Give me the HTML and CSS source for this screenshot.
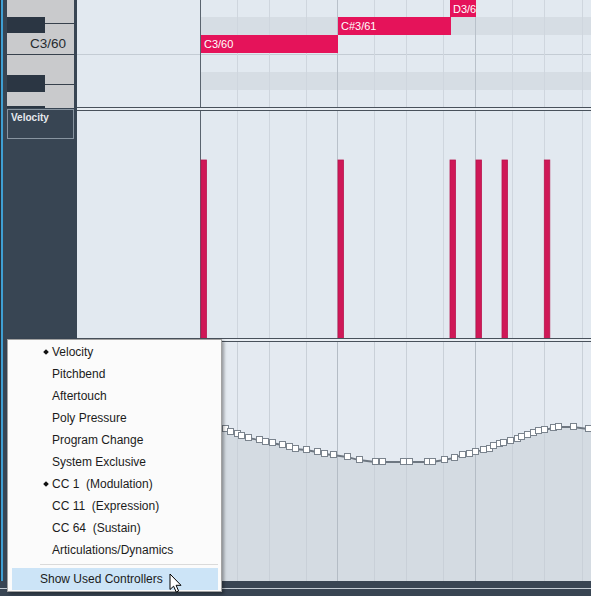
FILE: index.html
```html
<!DOCTYPE html>
<html>
<head>
<meta charset="utf-8">
<link rel="stylesheet" href="styles.css">
</head>
<body>
<div class="app">
  <div class="main">
    <div class="left">
      <div class="keyboard">
        <svg class="keys" width="67" height="108" viewBox="7 0 67 108">
          <rect x="7" y="0" width="67" height="108" fill="#c9cacc"/>
          <line x1="45" y1="23.5" x2="74" y2="23.5" stroke="#37414c"/>
          <line x1="7" y1="54.5" x2="74" y2="54.5" stroke="#37414c"/>
          <line x1="45" y1="84.5" x2="74" y2="84.5" stroke="#37414c"/>
          <rect x="7" y="17" width="38" height="16" fill="#2b3643"/>
          <rect x="7" y="75" width="38" height="17" fill="#2b3643"/>
          <rect x="7" y="106" width="38" height="2" fill="#2b3643"/>
        </svg>
        <span class="key-label">C3/60</span>
      </div>
      <div class="vel-head">Velocity</div>
    </div>
    <div class="lanes">
      <div class="lane note-lane">
        <svg class="bg" width="514" height="107" viewBox="77 0 514 107">
          <rect x="200" y="17" width="391" height="18" fill="#d6dde4"/>
          <rect x="200" y="72" width="391" height="18" fill="#d6dde4"/>
          <line x1="77" y1="54.5" x2="591" y2="54.5" stroke="#c4ccd4"/>
          <g stroke="#cfd6de">
            <line x1="237.5" y1="0" x2="237.5" y2="107"/>
            <line x1="269.5" y1="0" x2="269.5" y2="107"/>
            <line x1="306.5" y1="0" x2="306.5" y2="107"/>
            <line x1="374.5" y1="0" x2="374.5" y2="107"/>
            <line x1="406.5" y1="0" x2="406.5" y2="107"/>
            <line x1="443.5" y1="0" x2="443.5" y2="107"/>
            <line x1="512.5" y1="0" x2="512.5" y2="107"/>
            <line x1="544.5" y1="0" x2="544.5" y2="107"/>
            <line x1="582.5" y1="0" x2="582.5" y2="107"/>
          </g>
          <g stroke="#b9c1ca">
            <line x1="337.5" y1="0" x2="337.5" y2="107"/>
            <line x1="475.5" y1="0" x2="475.5" y2="107"/>
          </g>
          <line x1="200.5" y1="0" x2="200.5" y2="107" stroke="#5a646f"/>
        </svg>
        <div class="note n-c3">C3/60</div>
        <div class="note n-cs3">C#3/61</div>
        <div class="note n-d3">D3/6</div>
      </div>
      <div class="divider"></div>
      <div class="lane vel-lane">
        <svg class="bg" width="514" height="227" viewBox="77 111 514 227">
          <g stroke="#cfd6de">
            <line x1="237.5" y1="111" x2="237.5" y2="338"/>
            <line x1="269.5" y1="111" x2="269.5" y2="338"/>
            <line x1="306.5" y1="111" x2="306.5" y2="338"/>
            <line x1="374.5" y1="111" x2="374.5" y2="338"/>
            <line x1="406.5" y1="111" x2="406.5" y2="338"/>
            <line x1="443.5" y1="111" x2="443.5" y2="338"/>
            <line x1="512.5" y1="111" x2="512.5" y2="338"/>
            <line x1="544.5" y1="111" x2="544.5" y2="338"/>
            <line x1="582.5" y1="111" x2="582.5" y2="338"/>
          </g>
          <g stroke="#b9c1ca">
            <line x1="337.5" y1="111" x2="337.5" y2="338"/>
            <line x1="475.5" y1="111" x2="475.5" y2="338"/>
          </g>
          <line x1="200.5" y1="111" x2="200.5" y2="338" stroke="#5a646f"/>
          <g fill="#cf1857" stroke="#b8164e" stroke-width="0.8">
            <rect x="201" y="160" width="5.5" height="180"/>
            <rect x="338" y="160" width="5.5" height="180"/>
            <rect x="450" y="160" width="5.5" height="180"/>
            <rect x="476" y="160" width="5.5" height="180"/>
            <rect x="502" y="160" width="5.5" height="180"/>
            <rect x="544.3" y="160" width="5.5" height="180"/>
          </g>
        </svg>
      </div>
      <div class="divider"></div>
      <div class="lane cc-lane">
        <svg class="bg" width="514" height="239" viewBox="77 342 514 239">
          <polygon fill="#d4dbe2" points="200,427 215,428 225,429 230,432 237,434 241,436 248,438 259,440 265,442 272,443 282,445 289,447 295,449 306,450 317,452 324,454 333,455 347,457 359,460 375,462 382,462 403,462 409,462 427,462 432,462 444,460 454,458 462,455 469,454 475,452 483,450 489,449 493,446 499,444 503,443 510,441 517,439 521,437 527,435 533,433 538,431 544,430 553,428 558,427 573,427 588,429 591,429 591,581 200,581"/>
          <g stroke="#c9d0d8">
            <line x1="237.5" y1="342" x2="237.5" y2="581"/>
            <line x1="269.5" y1="342" x2="269.5" y2="581"/>
            <line x1="306.5" y1="342" x2="306.5" y2="581"/>
            <line x1="374.5" y1="342" x2="374.5" y2="581"/>
            <line x1="406.5" y1="342" x2="406.5" y2="581"/>
            <line x1="443.5" y1="342" x2="443.5" y2="581"/>
            <line x1="512.5" y1="342" x2="512.5" y2="581"/>
            <line x1="544.5" y1="342" x2="544.5" y2="581"/>
            <line x1="582.5" y1="342" x2="582.5" y2="581"/>
          </g>
          <g stroke="#b4bcc5">
            <line x1="337.5" y1="342" x2="337.5" y2="581"/>
            <line x1="475.5" y1="342" x2="475.5" y2="581"/>
          </g>
          <polyline fill="none" stroke="#6e7781" stroke-width="1.8" points="200,427 215,428 225,429 230,432 237,434 241,436 248,438 259,440 265,442 272,443 282,445 289,447 295,449 306,450 317,452 324,454 333,455 347,457 359,460 375,462 382,462 403,462 409,462 427,462 432,462 444,460 454,458 462,455 469,454 475,452 483,450 489,449 493,446 499,444 503,443 510,441 517,439 521,437 527,435 533,433 538,431 544,430 553,428 558,427 573,427 588,429 591,429"/>
          <g fill="#ffffff" stroke="#7a838d" stroke-width="1">
            <rect x="222.5" y="425.5" width="6" height="6"/>
            <rect x="227.5" y="428.5" width="6" height="6"/>
            <rect x="234.5" y="430.5" width="6" height="6"/>
            <rect x="238.5" y="432.5" width="6" height="6"/>
            <rect x="245.5" y="434.5" width="6" height="6"/>
            <rect x="256.5" y="436.5" width="6" height="6"/>
            <rect x="262.5" y="438.5" width="6" height="6"/>
            <rect x="269.5" y="439.5" width="6" height="6"/>
            <rect x="279.5" y="441.5" width="6" height="6"/>
            <rect x="286.5" y="443.5" width="6" height="6"/>
            <rect x="292.5" y="445.5" width="6" height="6"/>
            <rect x="303.5" y="446.5" width="6" height="6"/>
            <rect x="314.5" y="448.5" width="6" height="6"/>
            <rect x="321.5" y="450.5" width="6" height="6"/>
            <rect x="330.5" y="451.5" width="6" height="6"/>
            <rect x="344.5" y="453.5" width="6" height="6"/>
            <rect x="356.5" y="456.5" width="6" height="6"/>
            <rect x="372.5" y="458.5" width="6" height="6"/>
            <rect x="379.5" y="458.5" width="6" height="6"/>
            <rect x="400.5" y="458.5" width="6" height="6"/>
            <rect x="406.5" y="458.5" width="6" height="6"/>
            <rect x="424.5" y="458.5" width="6" height="6"/>
            <rect x="429.5" y="458.5" width="6" height="6"/>
            <rect x="441.5" y="456.5" width="6" height="6"/>
            <rect x="451.5" y="454.5" width="6" height="6"/>
            <rect x="459.5" y="451.5" width="6" height="6"/>
            <rect x="466.5" y="450.5" width="6" height="6"/>
            <rect x="472.5" y="448.5" width="6" height="6"/>
            <rect x="480.5" y="446.5" width="6" height="6"/>
            <rect x="486.5" y="445.5" width="6" height="6"/>
            <rect x="490.5" y="442.5" width="6" height="6"/>
            <rect x="496.5" y="440.5" width="6" height="6"/>
            <rect x="500.5" y="439.5" width="6" height="6"/>
            <rect x="507.5" y="437.5" width="6" height="6"/>
            <rect x="514.5" y="435.5" width="6" height="6"/>
            <rect x="518.5" y="433.5" width="6" height="6"/>
            <rect x="524.5" y="431.5" width="6" height="6"/>
            <rect x="530.5" y="429.5" width="6" height="6"/>
            <rect x="535.5" y="427.5" width="6" height="6"/>
            <rect x="541.5" y="426.5" width="6" height="6"/>
            <rect x="550.5" y="424.5" width="6" height="6"/>
            <rect x="555.5" y="423.5" width="6" height="6"/>
            <rect x="570.5" y="423.5" width="6" height="6"/>
            <rect x="585.5" y="425.5" width="6" height="6"/>
          </g>
        </svg>
      </div>
    </div>
  </div>
  <div class="bottombar"><div class="bottomline"></div></div>

  <div class="menu">
    <div class="item checked">Velocity</div>
    <div class="item">Pitchbend</div>
    <div class="item">Aftertouch</div>
    <div class="item">Poly Pressure</div>
    <div class="item">Program Change</div>
    <div class="item">System Exclusive</div>
    <div class="item checked">CC 1&nbsp; (Modulation)</div>
    <div class="item">CC 11&nbsp; (Expression)</div>
    <div class="item">CC 64&nbsp; (Sustain)</div>
    <div class="item">Articulations/Dynamics</div>
    <div class="sep"></div>
    <div class="item hl">Show Used Controllers</div>
  </div>

  <svg class="cursor" width="14" height="21" viewBox="0 0 14 21">
    <path d="M1 1 L1 16.5 L4.6 13.2 L7.2 19 L9.6 18 L7.1 12.3 L12 12.3 Z" fill="#ffffff" stroke="#000000" stroke-width="1" stroke-linejoin="round"/>
  </svg>
</div>
</body>
</html>
```

FILE: styles.css
```css
html, body {
  margin: 0;
  padding: 0;
}

body {
  width: 591px;
  height: 596px;
  overflow: hidden;
  background: #384553;
  font-family: "Liberation Sans", Arial, sans-serif;
}

.app {
  position: relative;
  width: 591px;
  height: 596px;
  display: flex;
  flex-direction: column;
}

.main {
  display: flex;
  height: 581px;
}

.left {
  width: 77px;
  flex: none;
  box-sizing: border-box;
  padding: 0 3px 0 7px;
  display: flex;
  flex-direction: column;
  background: linear-gradient(to right, #26303a 0, #26303a 1px, #3f9fd3 1px, #3f9fd3 3px, #384553 3px);
}

.keyboard {
  position: relative;
  height: 108px;
  flex: none;
}

.keys {
  display: block;
}

.key-label {
  position: absolute;
  right: 8px;
  top: 36px;
  font-size: 13.5px;
  line-height: 16px;
  color: #262b30;
}

.vel-head {
  margin-top: 1px;
  height: 30px;
  box-sizing: border-box;
  border: 1px solid #8894a0;
  padding: 2px 0 0 3px;
  font-size: 10px;
  line-height: 12px;
  font-weight: bold;
  color: #e6eaef;
}

.lanes {
  flex: 1;
  display: flex;
  flex-direction: column;
  background: #e2e9f0;
}

.lane {
  position: relative;
  overflow: hidden;
  flex: none;
}

.lane .bg {
  position: absolute;
  left: 0;
  top: 0;
  display: block;
}

.note-lane {
  height: 107px;
}

.vel-lane {
  height: 227px;
}

.cc-lane {
  height: 239px;
  background: #e4eaf1;
}

.divider {
  height: 4px;
  flex: none;
  box-sizing: border-box;
  border-top: 1px solid #48515b;
  border-bottom: 1px solid #48515b;
  background: #e9eef3;
}

.note {
  position: absolute;
  height: 18px;
  box-sizing: border-box;
  padding-left: 3px;
  padding-top: 1px;
  background: #e5135a;
  color: #ffffff;
  font-size: 11px;
  line-height: 17px;
  white-space: nowrap;
  overflow: hidden;
}

.n-c3 {
  left: 124px;
  top: 35px;
  width: 137px;
}

.n-cs3 {
  left: 261px;
  top: 17px;
  width: 113px;
}

.n-d3 {
  left: 373px;
  top: 0;
  width: 26px;
  height: 17px;
  line-height: 16px;
}

.bottombar {
  height: 15px;
  flex: none;
  background: #394553;
}

.bottomline {
  margin-top: 7px;
  height: 1px;
  background: #c3cbd3;
}

.menu {
  position: absolute;
  left: 7px;
  top: 339px;
  width: 215px;
  box-sizing: border-box;
  border: 1px solid #a2a2a2;
  padding: 1px 0;
  background: #fbfbfb;
  box-shadow: 2px 2px 3px rgba(0, 0, 0, 0.35);
  font-family: "Liberation Sans", Arial, sans-serif;
  font-size: 12px;
  color: #1b1b1b;
}

.item {
  position: relative;
  height: 22px;
  line-height: 23px;
  padding-left: 44px;
  white-space: nowrap;
}

.item.checked::before {
  content: "";
  position: absolute;
  left: 36px;
  top: 9px;
  width: 4px;
  height: 4px;
  background: #111111;
  transform: rotate(45deg);
}

.sep {
  height: 1px;
  margin: 3px 3px 3px 32px;
  background: #dadada;
}

.item.hl {
  margin: 0 3px 0 4px;
  padding-left: 28px;
  background: #cce4f7;
}

.cursor {
  position: absolute;
  left: 169px;
  top: 573px;
  display: block;
}
```
